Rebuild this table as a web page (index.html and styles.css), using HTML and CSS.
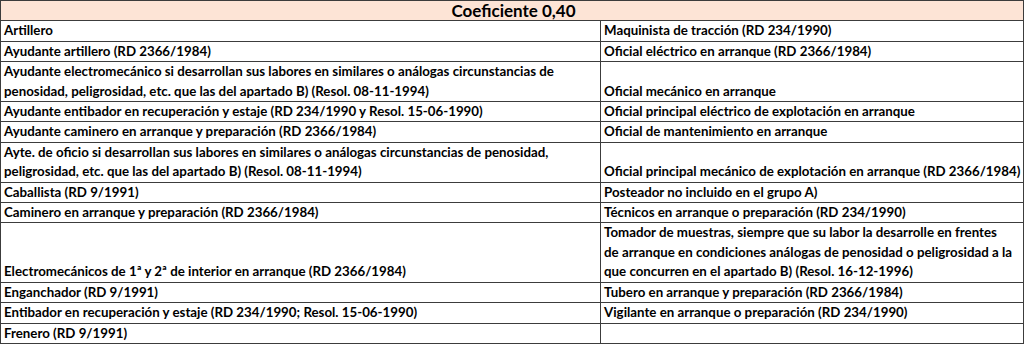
FILE: index.html
```html
<!DOCTYPE html>
<html lang="es">
<head>
<meta charset="utf-8">
<title>Coeficiente 0,40</title>
<link rel="stylesheet" href="styles.css">
</head>
<body>
<table class="coef">
  <colgroup><col class="c-left"><col class="c-right"></colgroup>
  <thead>
    <tr><th colspan="2" class="head">Coeficiente 0,40</th></tr>
  </thead>
  <tbody>
    <tr><td>Artillero</td><td>Maquinista de tracción (RD 234/1990)</td></tr>
    <tr><td>Ayudante artillero (RD 2366/1984)</td><td>Oficial eléctrico en arranque (RD 2366/1984)</td></tr>
    <tr><td>Ayudante electromecánico si desarrollan sus labores en similares o análogas circunstancias de<br>penosidad, peligrosidad, etc. que las del apartado B) (Resol. 08-11-1994)</td><td>Oficial mecánico en arranque</td></tr>
    <tr><td>Ayudante entibador en recuperación y estaje (RD 234/1990 y Resol. 15-06-1990)</td><td>Oficial principal eléctrico de explotación en arranque</td></tr>
    <tr><td>Ayudante caminero en arranque y preparación (RD 2366/1984)</td><td>Oficial de mantenimiento en arranque</td></tr>
    <tr><td>Ayte. de oficio si desarrollan sus labores en similares o análogas circunstancias de penosidad,<br>peligrosidad, etc. que las del apartado B) (Resol. 08-11-1994)</td><td>Oficial principal mecánico de explotación en arranque (RD 2366/1984)</td></tr>
    <tr><td>Caballista (RD 9/1991)</td><td>Posteador no incluido en el grupo A)</td></tr>
    <tr><td>Caminero en arranque y preparación (RD 2366/1984)</td><td>Técnicos en arranque o preparación (RD 234/1990)</td></tr>
    <tr><td>Electromecánicos de 1ª y 2ª de interior en arranque (RD 2366/1984)</td><td>Tomador de muestras, siempre que su labor la desarrolle en frentes<br>de arranque en condiciones análogas de penosidad o peligrosidad a la<br>que concurren en el apartado B) (Resol. 16-12-1996)</td></tr>
    <tr><td>Enganchador (RD 9/1991)</td><td>Tubero en arranque y preparación (RD 2366/1984)</td></tr>
    <tr><td>Entibador en recuperación y estaje (RD 234/1990; Resol. 15-06-1990)</td><td>Vigilante en arranque o preparación (RD 234/1990)</td></tr>
    <tr><td>Frenero (RD 9/1991)</td><td></td></tr>
  </tbody>
</table>
</body>
</html>
```

FILE: styles.css
```css
html, body {
  margin: 0;
  padding: 0;
  background: #ffffff;
}

.coef {
  border-collapse: collapse;
  width: 1023px;
  table-layout: fixed;
  font-family: Lato, "Liberation Sans", sans-serif;
  font-weight: bold;
  font-size: 13.3px;
  line-height: 19.4px;
  color: #000;
  border: 1px solid #333;
}

.c-left { width: 600px; }
.c-right { width: 423px; }

.coef th,
.coef td {
  border: 1px solid #3c3c3c;
  padding: 0 0 0 3px;
  vertical-align: bottom;
  text-align: left;
  white-space: nowrap;
  overflow: hidden;
}

.coef th.head {
  background: #fde4d6;
  text-align: center;
  font-size: 17px;
  line-height: 19.4px;
}
```
